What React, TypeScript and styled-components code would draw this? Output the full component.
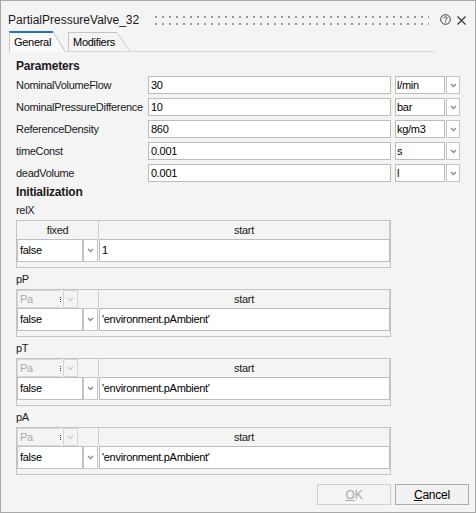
import React from "react";
import styled, { createGlobalStyle } from "styled-components";

const Global = createGlobalStyle`
  html, body { margin: 0; padding: 0; background: #f4f4f4; }
  body { font-family: "Liberation Sans", Arial, sans-serif; }
`;

const Window = styled.div`
  box-sizing: border-box;
  width: 476px;
  height: 513px;
  border: 1px solid #a9a9a9;
  background: #f4f4f4;
  display: flex;
  flex-direction: column;
  font-family: "Liberation Sans", Arial, sans-serif;
  font-size: 11px;
  letter-spacing: -0.3px;
  color: #000;
`;

const TitleBar = styled.div`
  display: flex;
  align-items: center;
  height: 18px;
  padding: 10px 9px 0 7px;
`;

const Title = styled.div`
  font-size: 12px;
  letter-spacing: 0;
  color: #1a1a1a;
  white-space: nowrap;
`;

const Grip = styled.svg`
  flex: 1;
  height: 9px;
  margin: 0 11px 0 16px;
  align-self: center;
`;

const IconSvg = styled.svg`
  display: block;
  flex: none;
`;

const TabStrip = styled.div`
  display: flex;
  align-items: flex-end;
  height: 20px;
  margin: 2px 41px 0 8px;
  border-bottom: 1px solid #d6d6d6;
`;

const TabWrap = styled.div<{ $active?: boolean }>`
  display: flex;
  height: ${(p) => (p.$active ? 21 : 19)}px;
  margin-bottom: ${(p) => (p.$active ? -1 : 0)}px;
  margin-right: 2px;
`;

const TabBody = styled.div<{ $active?: boolean }>`
  display: flex;
  align-items: center;
  padding: 0 2px 0 4px;
  border-left: 1px solid #c6c6c6;
  border-top: ${(p) => (p.$active ? "2px solid #1f73c4" : "1px solid #c6c6c6")};
  background: ${(p) => (p.$active ? "#fafafa" : "#f4f4f4")};
  padding-bottom: ${(p) => (p.$active ? 1 : 0)}px;
  white-space: nowrap;
`;

const Slant = styled.svg`
  display: block;
  width: 13px;
  height: 100%;
  flex: none;
`;

const Content = styled.div`
  display: flex;
  flex-direction: column;
  padding: 7px 0 0 15px;
`;

const Heading = styled.div<{ $gap?: number }>`
  font-weight: bold;
  font-size: 12px;
  letter-spacing: -0.2px;
  line-height: 14px;
  color: #1a1a1a;
  margin-top: ${(p) => p.$gap ?? 0}px;
`;

const ParamList = styled.div`
  display: flex;
  flex-direction: column;
  gap: 4px;
  margin-top: 3px;
`;

const ParamRow = styled.div`
  display: flex;
  align-items: center;
  height: 18px;
`;

const Label = styled.div`
  width: 132px;
  white-space: nowrap;
  color: #1a1a1a;
`;

const TextInput = styled.div<{ $w?: number }>`
  box-sizing: border-box;
  width: ${(p) => p.$w ?? 243}px;
  height: 18px;
  border: 1px solid #bcbcbc;
  background: #fff;
  padding-left: 2px;
  line-height: 16px;
  margin-right: 4px;
  white-space: nowrap;
`;

const UnitBox = styled.div`
  box-sizing: border-box;
  width: 50px;
  height: 18px;
  border: 1px solid #bcbcbc;
  background: #fff;
  padding-left: 1px;
  line-height: 16px;
`;

const DropButton = styled.div<{ $h?: number; $disabled?: boolean }>`
  box-sizing: border-box;
  width: ${(p) => (p.$disabled ? 15 : 14)}px;
  height: ${(p) => p.$h ?? 18}px;
  margin-left: ${(p) => (p.$disabled ? 0 : 1)}px;
  border: 1px solid ${(p) => (p.$disabled ? "#d6d6d6" : "#c6c6c6")};
  background: ${(p) => (p.$disabled ? "#f4f4f4" : "#fff")};
  display: flex;
  align-items: center;
  justify-content: center;
`;

const SubLabel = styled.div`
  line-height: 14px;
  margin-top: 4px;
  color: #1a1a1a;
`;

const Table = styled.div`
  box-sizing: border-box;
  width: 375px;
  margin-top: 3px;
  border: 1px solid #c4c4c4;
  padding-bottom: 5px;
  background: #f4f4f4;
`;

const THead = styled.div`
  display: grid;
  grid-template-columns: 82px 1fr;
  height: 18px;
`;

const HeadCell = styled.div<{ $start?: boolean }>`
  display: flex;
  align-items: ${(p) => (p.$start ? "stretch" : "center")};
  justify-content: ${(p) => (p.$start ? "flex-start" : "center")};
  border-right: 1px solid #cdcdcd;
  color: #1a1a1a;
`;

const PaBox = styled.div`
  box-sizing: border-box;
  width: 43px;
  border: 1px solid #d6d6d6;
  border-right: none;
  color: #a9a9a9;
  padding-left: 2px;
  line-height: 16px;
`;

const Colon = styled.div`
  width: 1px;
  height: 5px;
  align-self: center;
  border-left: 1px dotted #333;
  margin-right: 1px;
`;

const DataRow = styled.div`
  display: flex;
  height: 23px;
`;

const Combo = styled.div`
  box-sizing: border-box;
  width: 66px;
  height: 23px;
  border: 1px solid #c0c0c0;
  background: #fff;
  padding-left: 2px;
  line-height: 21px;
`;

const ComboButton = styled.div`
  box-sizing: border-box;
  width: 15px;
  height: 23px;
  border: 1px solid #c6c6c6;
  background: #fff;
  display: flex;
  align-items: center;
  justify-content: center;
  margin-right: 1px;
`;

const CellInput = styled.div`
  box-sizing: border-box;
  flex: 1;
  height: 23px;
  border: 1px solid #bcbcbc;
  background: #fff;
  padding-left: 2px;
  line-height: 21px;
  white-space: nowrap;
`;

const Footer = styled.div`
  display: flex;
  justify-content: flex-end;
  gap: 4px;
  margin-top: 9px;
  padding-right: 6px;
`;

const Button = styled.div<{ $disabled?: boolean }>`
  box-sizing: border-box;
  width: 74px;
  height: 21px;
  border: 1px solid ${(p) => (p.$disabled ? "#cfcfcf" : "#adadad")};
  background: ${(p) => (p.$disabled ? "#f4f4f4" : "#f1f1f1")};
  color: ${(p) => (p.$disabled ? "#a8a8a8" : "#000")};
  display: flex;
  align-items: center;
  justify-content: center;
  font-size: 12px;
  letter-spacing: -0.2px;
`;

const Chevron = ({ light }: { light?: boolean }) => (
  <IconSvg width="7" height="5" viewBox="0 0 7 5">
    <path d="M1 1 L3.5 3.5 L6 1" fill="none" stroke={light ? "#cfcfcf" : "#8f8f8f"} strokeWidth="1.5" />
  </IconSvg>
);

const Tab = ({ label, active }: { label: string; active?: boolean }) => (
  <TabWrap $active={active}>
    <TabBody $active={active}>{label}</TabBody>
    <Slant viewBox="0 0 13 20" preserveAspectRatio="none">
      <polygon points="0,0 0.5,0 13,20 0,20" fill={active ? "#fafafa" : "#f4f4f4"} />
      <line x1="0" y1="0.5" x2="12.5" y2="20" stroke="#c6c6c6" strokeWidth="1" />
    </Slant>
  </TabWrap>
);

const params = [
  { name: "NominalVolumeFlow", value: "30", unit: "l/min" },
  { name: "NominalPressureDifference", value: "10", unit: "bar" },
  { name: "ReferenceDensity", value: "860", unit: "kg/m3" },
  { name: "timeConst", value: "0.001", unit: "s" },
  { name: "deadVolume", value: "0.001", unit: "l" },
];

const inits = [
  { name: "relX", value: "1", unit: false },
  { name: "pP", value: "'environment.pAmbient'", unit: true },
  { name: "pT", value: "'environment.pAmbient'", unit: true },
  { name: "pA", value: "'environment.pAmbient'", unit: true },
];

export default function App() {
  return (
    <>
      <Global />
      <Window>
        <TitleBar>
          <Title>PartialPressureValve_32</Title>
          <Grip shapeRendering="crispEdges">
            <defs>
              <pattern id="dots" width="7" height="7" patternUnits="userSpaceOnUse">
                <rect x="0" y="0" width="2" height="2" fill="#9a9a9a" />
              </pattern>
            </defs>
            <rect x="0" y="0" width="100%" height="9" fill="url(#dots)" />
          </Grip>
          <IconSvg width="11" height="11" viewBox="0 0 11 11" style={{ marginTop: -2 }}>
            <circle cx="5.5" cy="5.5" r="4.8" fill="none" stroke="#3a3a3a" strokeWidth="1" />
            <path d="M3.9 4.3 C3.9 2.4 7.1 2.4 7.1 4.2 C7.1 5.3 5.5 5.4 5.5 6.6" fill="none" stroke="#3a3a3a" strokeWidth="1" />
            <rect x="5" y="7.5" width="1" height="1" fill="#3a3a3a" />
          </IconSvg>
          <IconSvg width="9" height="9" viewBox="0 0 9 9" style={{ marginLeft: 6 }}>
            <path d="M0.5 0.5 L8.5 8.5 M8.5 0.5 L0.5 8.5" stroke="#333" strokeWidth="1.1" />
          </IconSvg>
        </TitleBar>
        <TabStrip>
          <Tab label="General" active />
          <Tab label="Modifiers" />
        </TabStrip>
        <Content>
          <Heading>Parameters</Heading>
          <ParamList>
            {params.map((p) => (
              <ParamRow key={p.name}>
                <Label>{p.name}</Label>
                <TextInput>{p.value}</TextInput>
                <UnitBox>{p.unit}</UnitBox>
                <DropButton>
                  <Chevron />
                </DropButton>
              </ParamRow>
            ))}
          </ParamList>
          <Heading $gap={3}>Initialization</Heading>
          {inits.map((it) => (
            <React.Fragment key={it.name}>
              <SubLabel>{it.name}</SubLabel>
              <Table>
                <THead>
                  {it.unit ? (
                    <HeadCell $start>
                      <PaBox>Pa</PaBox>
                      <Colon />
                      <DropButton $disabled>
                        <Chevron light />
                      </DropButton>
                    </HeadCell>
                  ) : (
                    <HeadCell>fixed</HeadCell>
                  )}
                  <HeadCell>start</HeadCell>
                </THead>
                <DataRow>
                  <Combo>false</Combo>
                  <ComboButton>
                    <Chevron />
                  </ComboButton>
                  <CellInput>{it.value}</CellInput>
                </DataRow>
              </Table>
            </React.Fragment>
          ))}
        </Content>
        <Footer>
          <Button $disabled>
            <span>
              <u>O</u>K
            </span>
          </Button>
          <Button>
            <span>
              <u>C</u>ancel
            </span>
          </Button>
        </Footer>
      </Window>
    </>
  );
}
